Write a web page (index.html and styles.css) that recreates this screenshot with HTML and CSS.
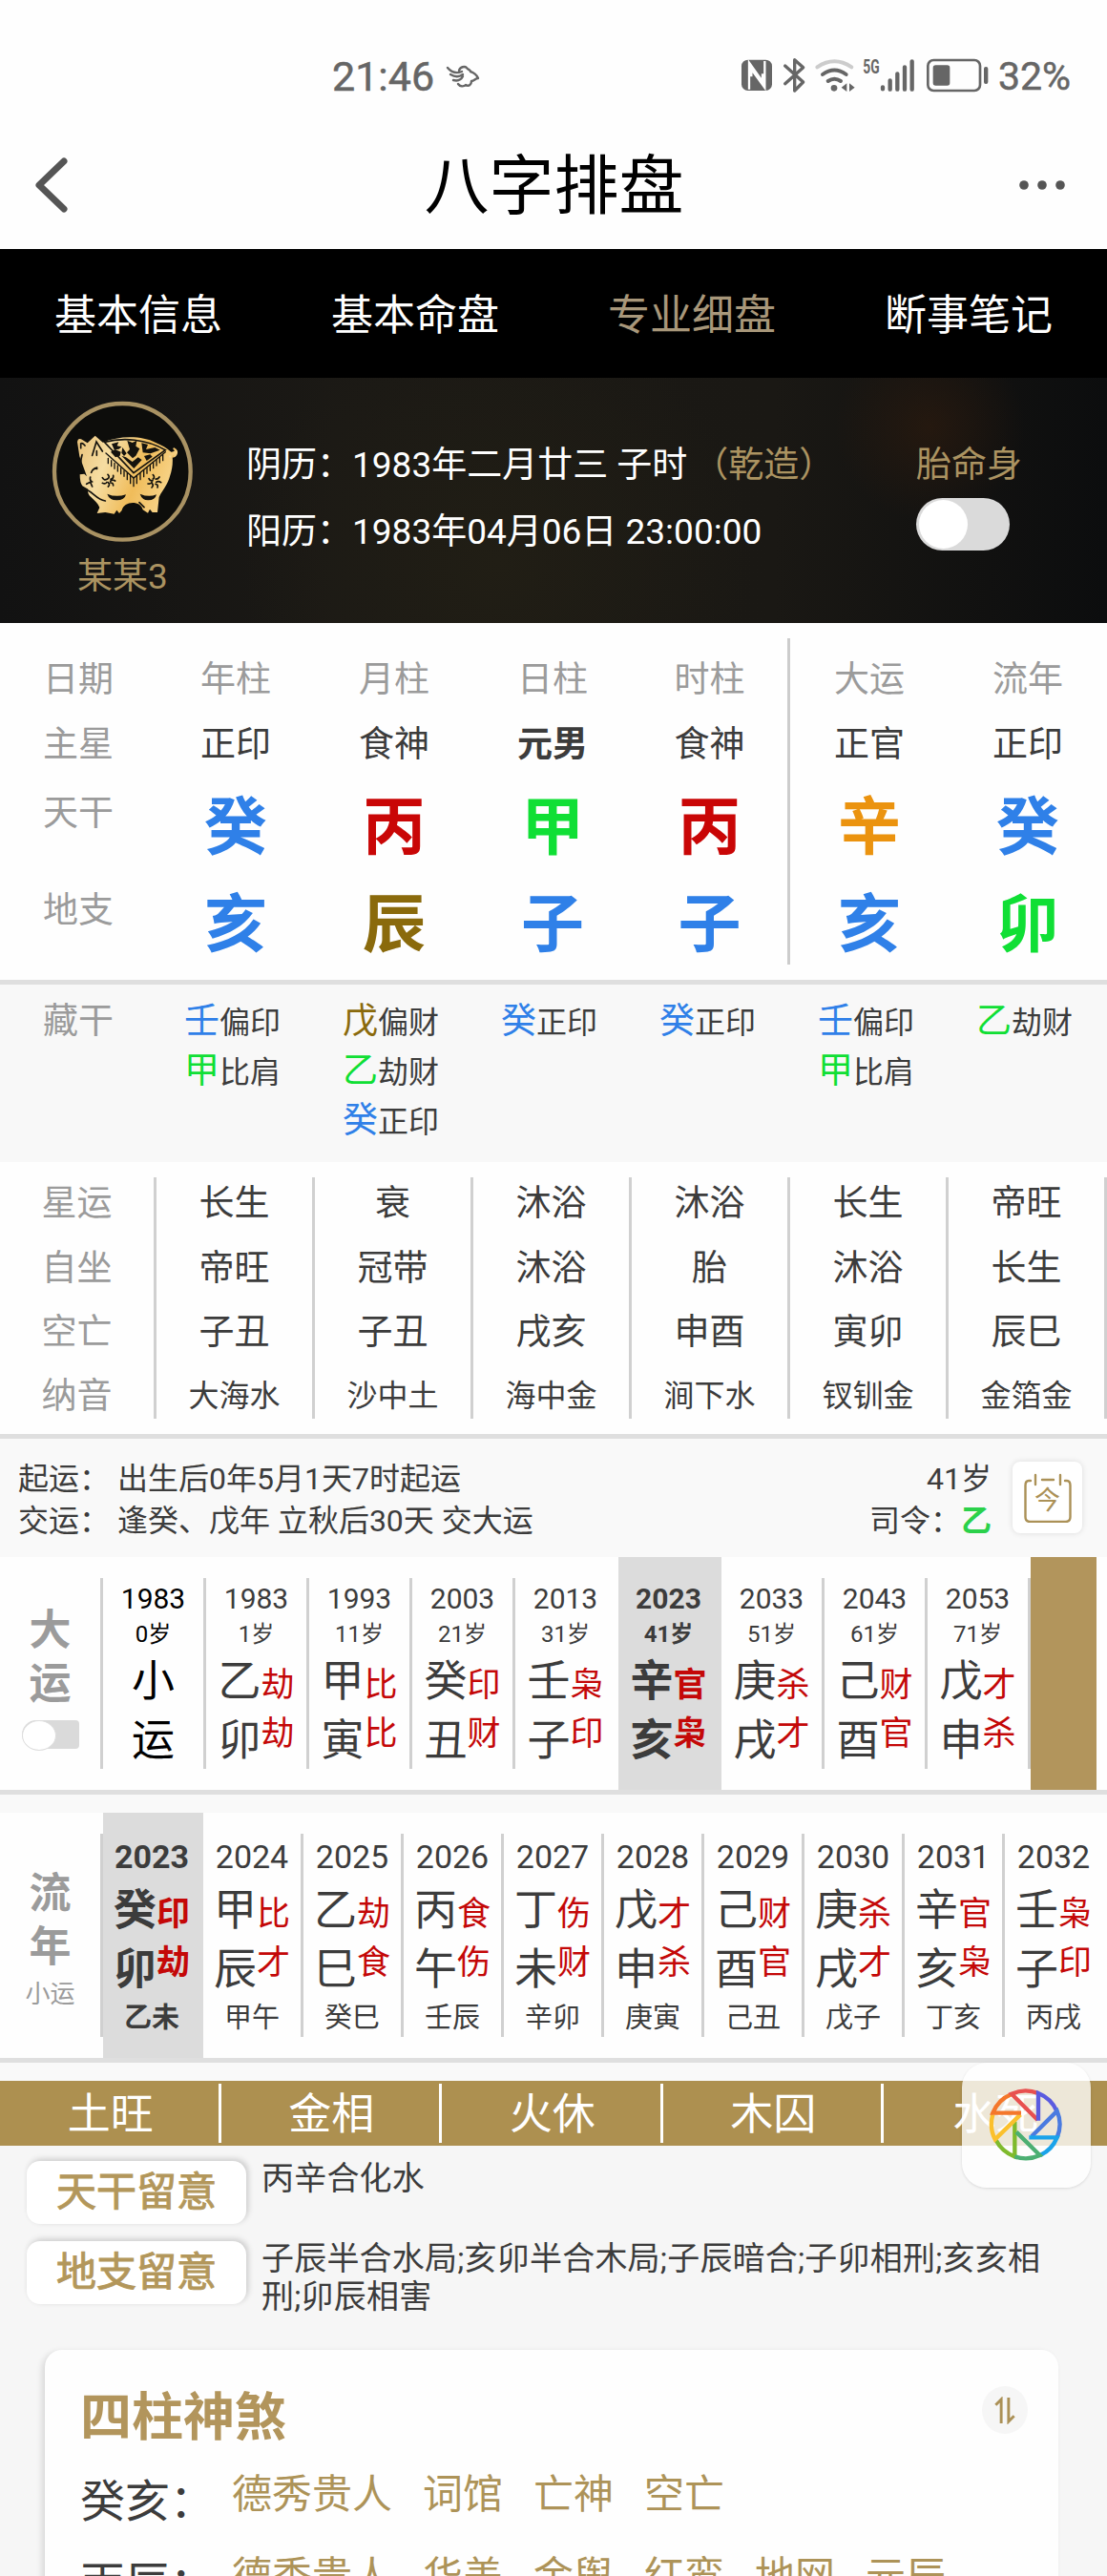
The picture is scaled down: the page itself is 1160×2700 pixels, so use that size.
FILE: index.html
```html
<!DOCTYPE html>
<html lang="zh-CN">
<head>
  <meta charset="UTF-8">
  <meta name="viewport" content="width=device-width, initial-scale=1.0">
  <title>八字排盘</title>
  <link rel="stylesheet" href="styles.css">
</head>

<body>
  <div class="page">
    <div class="status">
      <span class="time">21:46</span>
      <svg class="status-app" viewBox="0 0 36 24" fill="none" stroke="#666" stroke-width="2.4" stroke-linecap="round" stroke-linejoin="round">
        <path d="M2 3C7 9 12 9 17 7M5 10c5 3 9 3 13 0M8 16c4 1 8 0 10-4M14 6c1-4 6-5 8-3 1 2 4 2 4 4 3 1 7 4 8 7-3 0-4 3-7 3 0 4-3 6-6 4-2 2-6 2-8-1" />
      </svg>
      <svg class="status-icons" viewBox="0 0 810 180">
        <rect x="21" y="38" width="96" height="97" rx="20" fill="#666" />
        <path d="M45 131V47L87 106V82M94 42v84L52 68v23" fill="none" stroke="#fff" stroke-width="7" />
        <path d="M158 57l57 51-27 27V38l27 24-57 51" fill="none" stroke="#666" stroke-width="10" stroke-linecap="round" stroke-linejoin="round" />
        <path d="M259 61q54-36 108 0" fill="none" stroke="#ccc" stroke-width="12" stroke-linecap="round" />
        <path d="M276 84q37-27 74 0M293 105q20-13 40 0" fill="none" stroke="#666" stroke-width="12" stroke-linecap="round" />
        <circle cx="312" cy="127" r="10" fill="#666" />
        <path d="M352 112v26l-17-13zM360 112v26l17-13z" fill="#666" />
        <text x="403" y="80" class="net" textLength="52" lengthAdjust="spacingAndGlyphs">5G</text>
        <path d="M465 124v6M488 103v28M511 82v49M534 61v70M557 43v88" stroke="#666" stroke-width="13" stroke-linecap="round" />
        <rect x="607" y="39" width="164" height="96" rx="18" fill="none" stroke="#666" stroke-width="8" />
        <rect x="623" y="55" width="53" height="64" rx="8" fill="#666" />
        <rect x="783" y="60" width="13" height="54" rx="6" fill="#666" />
      </svg>
      <span class="power">32%</span>
    </div>

    <div class="titlebar">
      <svg class="back" viewBox="0 0 36 60" fill="none" stroke="#555" stroke-width="7" stroke-linecap="round" stroke-linejoin="round">
        <path d="M31 5L5 30l26 25" />
      </svg>
      <h1>八字排盘</h1>
      <svg class="more" viewBox="0 0 50 12" fill="#555">
        <circle cx="6" cy="6" r="4.8" />
        <circle cx="25" cy="6" r="4.8" />
        <circle cx="44" cy="6" r="4.8" />
      </svg>
    </div>

    <div class="tabs">
      <span>基本信息</span>
      <span>基本命盘</span>
      <span class="on">专业细盘</span>
      <span>断事笔记</span>
    </div>

    <div class="hero">
      <div class="avatar">
        <svg viewBox="0 0 480 480">
          <defs>
            <linearGradient id="gold" x1="0" x2="1" y1="0" y2="0.3">
              <stop offset="0" stop-color="#e9c27a" />
              <stop offset="0.35" stop-color="#f6dda2" />
              <stop offset="0.7" stop-color="#f0bc5a" />
              <stop offset="1" stop-color="#f7d285" />
            </linearGradient>
          </defs>
          <circle cx="235" cy="238" r="214" fill="#0d0d0b" stroke="#a99263" stroke-width="13" />
          <path fill="url(#gold)" d="M100 190L93 145q2-14 12-9l20 12 24-23 24 21c50-22 125-22 165 0 20 8 38 18 50 30 10 0 14-5 10-12 12 4 12 24-6 27 2 20-1 42-8 62-6 25-25 45-34 65l-5 48h-16l-8-10-6 12-16-10c-5-30-60-30-66 2l-8 9-8-10-8 12-28-5-26 3 8-18c-4-12-16-22-26-32-10-8-12-16-10-26l-18-10q-8-10-8-36l14-2 8 8z" />
          <path fill="none" stroke="url(#gold)" stroke-width="6" stroke-linecap="round" d="M383 190c20 6 30-14 14-24" />
          <g fill="none" stroke="#15130e" stroke-width="5" stroke-linecap="round">
            <path d="M104 150q5-4 13 6M104 150v14M140 187l13-43 19 30M154 187v-14M108 185q-10 35 5 53M137 241q5-15 18-12M155 225l-8 3M140 270q-9-3-6-15M134 271l-12 6M134 271l6 14M113 292c28 5 36 32 68 38M288 335l15 15" />
            <path d="M178 145c60-15 130-10 192 25L270 242z" />
            <path d="M183 180l87 78 100-82" stroke-width="4" />
            <path d="M190 196v16M200 203v18M210 211v18M220 219v18M230 227v18M240 235v18M250 243v20M260 250v25M270 256v28M280 250v25M291 243v20M302 234v20M312 226v18M322 217v18M332 209v18M342 201v18M352 193v17M362 185v18" stroke-width="4" />
            <path d="M189 247q8 8-1 14M206 250q2 10-8 12M212 267q-9-6-15 1M206 282q0-10-9-9M190 285q7-6 0-13M172 274q9 5 14-3M172 257q5 10 14 5" />
            <path d="M331 248q7 7 0 13M351 255q-5 8-12 6M356 272q-8-6-15-1M345 288q3-10-6-11M327 288q7-7 1-13M315 276q10 2 13-6M318 260q3 8 12 6" />
          </g>
          <path fill="#15130e" d="M187 308q28 12 59 2-4 18-29 18-24-1-30-20zM290 308q28 12 52 2-4 18-26 18-20-1-26-20z" />
          <path fill="#15130e" d="M201 151l22-6-5 12 14 3-8 7-15 2zM250 140l16 7 14-7-3 18 12 8-12 22-10 8-18-18 9-10zM295 148l20 5-6 15 28-6 16 8-30 11-24-3zM198 176l14-8 18 8-3 12-14 5zM232 188l14 5 20 14 18-14 12 8-25 27zM235 162l13 19-8 8-8-10zM303 189l19-5 7 7-18 13z" />
        </svg>
        <p>某某3</p>
      </div>
      <div class="birth">
        <p>阴历：1983年二月廿三 子时<em>（乾造）</em></p>
        <p>阳历：1983年04月06日 23:00:00</p>
      </div>
      <div class="fetal">
        <p>胎命身</p>
        <div class="switch"></div>
      </div>
    </div>

    <div class="pillars">
      <div class="col label">
        <p>日期</p>
        <p>主星</p>
        <p class="big">天干</p>
        <p class="big">地支</p>
      </div>
      <div class="col">
        <p class="head">年柱</p>
        <p>正印</p>
        <p class="big water">癸</p>
        <p class="big water">亥</p>
      </div>
      <div class="col">
        <p class="head">月柱</p>
        <p>食神</p>
        <p class="big fire">丙</p>
        <p class="big earth">辰</p>
      </div>
      <div class="col">
        <p class="head">日柱</p>
        <p><b>元男</b></p>
        <p class="big wood">甲</p>
        <p class="big water">子</p>
      </div>
      <div class="col line">
        <p class="head">时柱</p>
        <p>食神</p>
        <p class="big fire">丙</p>
        <p class="big water">子</p>
      </div>
      <div class="col">
        <p class="head">大运</p>
        <p>正官</p>
        <p class="big metal">辛</p>
        <p class="big water">亥</p>
      </div>
      <div class="col">
        <p class="head">流年</p>
        <p>正印</p>
        <p class="big water">癸</p>
        <p class="big wood">卯</p>
      </div>
    </div>
    <div class="rule"></div>

    <div class="hidden-stems">
      <div class="col label"><p>藏干</p></div>
      <div class="col">
        <p><span class="water">壬</span>偏印</p>
        <p><span class="wood">甲</span>比肩</p>
      </div>
      <div class="col">
        <p><span class="earth">戊</span>偏财</p>
        <p><span class="wood">乙</span>劫财</p>
        <p><span class="water">癸</span>正印</p>
      </div>
      <div class="col"><p><span class="water">癸</span>正印</p></div>
      <div class="col"><p><span class="water">癸</span>正印</p></div>
      <div class="col">
        <p><span class="water">壬</span>偏印</p>
        <p><span class="wood">甲</span>比肩</p>
      </div>
      <div class="col"><p><span class="wood">乙</span>劫财</p></div>
    </div>

    <div class="stages">
      <div class="col label"><p>星运</p><p>自坐</p><p>空亡</p><p>纳音</p></div>
      <div class="col"><p>长生</p><p>帝旺</p><p>子丑</p><p class="nayin">大海水</p></div>
      <div class="col"><p>衰</p><p>冠带</p><p>子丑</p><p class="nayin">沙中土</p></div>
      <div class="col"><p>沐浴</p><p>沐浴</p><p>戌亥</p><p class="nayin">海中金</p></div>
      <div class="col"><p>沐浴</p><p>胎</p><p>申酉</p><p class="nayin">涧下水</p></div>
      <div class="col"><p>长生</p><p>沐浴</p><p>寅卯</p><p class="nayin">钗钏金</p></div>
      <div class="col"><p>帝旺</p><p>长生</p><p>辰巳</p><p class="nayin">金箔金</p></div>
    </div>
    <div class="rule"></div>

    <div class="start">
      <div class="start-text">
        <p>起运： 出生后0年5月1天7时起运</p>
        <p>交运： 逢癸、戊年 立秋后30天 交大运</p>
      </div>
      <div class="start-age">
        <p>41岁</p>
        <p>司令：<b>乙</b></p>
      </div>
      <div class="today">
        <svg viewBox="0 0 50 52" fill="none" stroke="#ab9157" stroke-width="2.4" stroke-linecap="round">
          <path d="M7 8H5Q1.500 8 1.500 13v33q0 5 5 5h37q5 0 5-5V13q0-5-3.500-5h-2M12 2v10M38 2v10M19 7h12" />
        </svg>
        <span>今</span>
      </div>
    </div>

    <div class="strip dayun">
      <div class="side">
        <b>大</b>
        <b>运</b>
        <div class="switch small"></div>
      </div>
      <div class="cell xiaoyun"><div><h4>1983</h4><h5>0岁</h5><p>小</p><p>运</p></div></div>
      <div class="cell"><div><h4>1983</h4><h5>1岁</h5><p>乙<i>劫</i></p><p>卯<i>劫</i></p></div></div>
      <div class="cell"><div><h4>1993</h4><h5>11岁</h5><p>甲<i>比</i></p><p>寅<i>比</i></p></div></div>
      <div class="cell"><div><h4>2003</h4><h5>21岁</h5><p>癸<i>印</i></p><p>丑<i>财</i></p></div></div>
      <div class="cell no-line"><div><h4>2013</h4><h5>31岁</h5><p>壬<i>枭</i></p><p>子<i>印</i></p></div></div>
      <div class="cell active"><div><h4>2023</h4><h5>41岁</h5><p>辛<i>官</i></p><p>亥<i>枭</i></p></div></div>
      <div class="cell"><div><h4>2033</h4><h5>51岁</h5><p>庚<i>杀</i></p><p>戌<i>才</i></p></div></div>
      <div class="cell"><div><h4>2043</h4><h5>61岁</h5><p>己<i>财</i></p><p>酉<i>官</i></p></div></div>
      <div class="cell"><div><h4>2053</h4><h5>71岁</h5><p>戊<i>才</i></p><p>申<i>杀</i></p></div></div>
      <div class="more-years"></div>
    </div>
    <div class="rule"></div>

    <div class="gap"></div>

    <div class="strip liunian">
      <div class="side">
        <b>流</b>
        <b>年</b>
        <small>小运</small>
      </div>
      <div class="cell active"><div><h4>2023</h4><p>癸<i>印</i></p><p>卯<i>劫</i></p><h6>乙未</h6></div></div>
      <div class="cell"><div><h4>2024</h4><p>甲<i>比</i></p><p>辰<i>才</i></p><h6>甲午</h6></div></div>
      <div class="cell"><div><h4>2025</h4><p>乙<i>劫</i></p><p>巳<i>食</i></p><h6>癸巳</h6></div></div>
      <div class="cell"><div><h4>2026</h4><p>丙<i>食</i></p><p>午<i>伤</i></p><h6>壬辰</h6></div></div>
      <div class="cell"><div><h4>2027</h4><p>丁<i>伤</i></p><p>未<i>财</i></p><h6>辛卯</h6></div></div>
      <div class="cell"><div><h4>2028</h4><p>戊<i>才</i></p><p>申<i>杀</i></p><h6>庚寅</h6></div></div>
      <div class="cell"><div><h4>2029</h4><p>己<i>财</i></p><p>酉<i>官</i></p><h6>己丑</h6></div></div>
      <div class="cell"><div><h4>2030</h4><p>庚<i>杀</i></p><p>戌<i>才</i></p><h6>戊子</h6></div></div>
      <div class="cell"><div><h4>2031</h4><p>辛<i>官</i></p><p>亥<i>枭</i></p><h6>丁亥</h6></div></div>
      <div class="cell no-line"><div><h4>2032</h4><p>壬<i>枭</i></p><p>子<i>印</i></p><h6>丙戌</h6></div></div>
    </div>
    <div class="rule"></div>

    <div class="gap"></div>

    <div class="elements">
      <span>土旺</span>
      <span>金相</span>
      <span>火休</span>
      <span>木囚</span>
      <span>水死</span>
    </div>

    <div class="notes">
      <div class="note">
        <b>天干留意</b>
        <p>丙辛合化水</p>
      </div>
      <div class="note">
        <b>地支留意</b>
        <p>子辰半合水局;亥卯半合木局;子辰暗合;子卯相刑;亥亥相刑;卯辰相害</p>
      </div>
    </div>

    <div class="card">
      <div class="card-head">
        <h2>四柱神煞</h2>
        <div class="sort">
          <svg viewBox="0 0 24 30" fill="none" stroke="#ab9157" stroke-width="3">
            <path d="M2 9l6-6v26M22 21l-6 6V1" />
          </svg>
        </div>
      </div>
      <div class="stars">
        <strong>癸亥：</strong>
        <span>德秀贵人</span><span>词馆</span><span>亡神</span><span>空亡</span>
      </div>
      <div class="stars">
        <strong>丙辰：</strong>
        <span>德秀贵人</span><span>华盖</span><span>金舆</span><span>红鸾</span><span>地网</span><span>元辰</span>
      </div>
    </div>

    <div class="float">
      <svg viewBox="105 80 240 240" fill="none" stroke-width="13">
        <path stroke="#7fba2c" d="M190 190v110A106 106 0 0 1 131 249" />
        <path stroke="#fbc02d" d="M208 168l-80 78A106 106 0 0 1 121 168" />
        <path stroke="#f4772b" d="M210 163H121A106 106 0 0 1 180 104" />
        <path stroke="#e8504f" d="M262 185l-82-82A106 106 0 0 1 264 101" />
        <path stroke="#5b5be0" d="M264 187V101A106 106 0 0 1 322 157" />
        <path stroke="#4a7be0" d="M243 237l80-80A106 106 0 0 1 323 240" />
        <path stroke="#1aa3ea" d="M235 240h88A106 106 0 0 1 270 296" />
        <path stroke="#4caf72" d="M195 223l74 73A106 106 0 0 1 190 300" />
      </svg>
    </div>
  </div>
</body>

</html>
```

FILE: styles.css
```css
* {
  box-sizing: border-box;
  margin: 0;
  padding: 0;
}

body {
  font-family: Roboto, "Noto Sans CJK SC", sans-serif;
  color: #3c3c3c;
  background: #f6f6f6;
}

i,
em {
  font-style: normal;
}

svg {
  display: block;
  flex: none;
}

.page {
  position: relative;
  width: 1160px;
  height: 2700px;
  overflow: hidden;
}

/* status bar */
.status {
  display: flex;
  align-items: center;
  height: 160px;
  padding-left: 348px;
  background: #fefefe;
  color: #666;
  white-space: nowrap;
}

.time {
  width: 119px;
  font-size: 43px;
}

.status-app {
  width: 36px;
  height: 24px;
}

.status-icons {
  width: 270px;
  height: 60px;
  margin-left: 267px;
}

.net {
  font-size: 60px;
  font-weight: bold;
  fill: #666;
}

.power {
  margin-left: 6px;
  font-size: 41px;
}

.time,
.power {
  -webkit-text-stroke: 0.5px #666;
}

.titlebar {
  display: flex;
  align-items: center;
  justify-content: space-between;
  height: 101px;
  padding: 0 43px 33px 36px;
  background: #fefefe;
}

.titlebar h1 {
  font-size: 68px;
  font-weight: normal;
  line-height: 72px;
  color: #000;
  padding: 4px 0 0 22px;
}

.back {
  width: 36px;
  height: 60px;
}

.more {
  width: 50px;
  height: 12px;
}

.tabs {
  display: flex;
  height: 135px;
  line-height: 140px;
  background: #000;
  color: #fff;
  font-size: 44px;
}

.tabs span {
  flex: 1;
  text-align: center;
}

.tabs .on {
  color: #a8977a;
}

/* profile */
.hero {
  display: flex;
  height: 257px;
  font-size: 37px;
  color: #fff;
  background:
    radial-gradient(circle at 84% 20%, rgba(48, 28, 14, 0.6) 0, transparent 10%),
    radial-gradient(circle at 45% 75%, #211e15 0, transparent 40%),
    linear-gradient(90deg, #121212, #1b1915 30%, #1a1814 70%, #0c0d0e);
}

.avatar {
  width: 210px;
  padding: 19px 0 0 50px;
}

.avatar svg {
  width: 160px;
  height: 160px;
}

.avatar p {
  width: 157px;
  margin-top: 9px;
  line-height: 42px;
  text-align: center;
  color: #ab9361;
}

.birth {
  width: 750px;
  padding: 57px 0 0 48px;
  line-height: 70px;
  white-space: nowrap;
}

.birth em,
.fetal p {
  color: #ab9361;
}

.birth em {
  margin-left: 6px;
}

.fetal {
  padding-top: 57px;
  line-height: 70px;
}

.fetal p {
  height: 69px;
}

.switch {
  width: 98px;
  height: 55px;
  padding: 2px 3px;
  border-radius: 28px;
  background: #dadada;
}

.switch::before {
  content: "";
  display: block;
  width: 51px;
  height: 51px;
  border-radius: 50%;
  background: #fff;
}

/* four pillars */
.pillars,
.hidden-stems,
.stages {
  display: flex;
  font-size: 37px;
}

.col {
  width: 166px;
  text-align: center;
}

.label {
  width: 164px;
  color: #9b9b9b;
}

.pillars {
  height: 374px;
  padding-top: 16px;
  background: #fefefe;
}

.pillars .col {
  height: 342px;
  padding-top: 10px;
  line-height: 68px;
}

.pillars .line {
  border-right: 3px solid #ccc;
}

.pillars .head {
  color: #9b9b9b;
}

.pillars .big {
  height: 102px;
  font-size: 66px;
  font-weight: bold;
  line-height: 106px;
}

.pillars .label .big {
  font-size: 37px;
  font-weight: normal;
  line-height: 76px;
}

.water {
  color: #2f80e8;
}

.fire {
  color: #c90606;
}

.wood {
  color: #10df35;
}

.earth {
  color: #8a6a0c;
}

.metal {
  color: #eb930f;
}

.rule {
  height: 5px;
  background: #dfdfdf;
}

.hidden-stems {
  height: 186px;
  padding-top: 13px;
  background: #f8f8f8;
  line-height: 52px;
}

.hidden-stems .col {
  font-size: 32px;
  padding-left: 29px;
  text-align: left;
}

.hidden-stems .label {
  padding-left: 0;
  font-size: 37px;
  text-align: center;
}

.hidden-stems span {
  font-size: 37px;
}

.hidden-stems .col p {
  height: 52px;
}

.stages {
  height: 285px;
  padding-top: 16px;
  background: #fefefe;
}

.stages .col {
  display: flex;
  flex-direction: column;
  gap: 15.5px;
  height: 253px;
  border-right: 3px solid #d0d0d0;
  line-height: 56px;
}

.stages p {
  height: 52px;
}

.stages p:last-child {
  line-height: 53px;
}

.nayin {
  font-size: 32px;
}

/* start of luck */
.start {
  display: flex;
  height: 124px;
  padding: 20px 26px 0 19px;
  background: #f9f9f9;
  font-size: 32px;
  line-height: 44px;
}

.start-text {
  flex: 1;
  white-space: nowrap;
}

.start-age {
  margin-right: 22px;
  text-align: right;
}

.start-age b {
  color: #2bd14b;
}

.today {
  display: grid;
  place-items: center;
  width: 73px;
  height: 75px;
  margin-top: 4px;
  border-radius: 8px;
  background: #fff;
  box-shadow: 0 0 6px rgba(0, 0, 0, 0.12);
}

.today svg,
.today span {
  grid-area: 1 / 1;
}

.today svg {
  width: 50px;
  height: 52px;
}

.today span {
  padding-top: 8px;
  font-size: 27px;
  line-height: 27px;
  color: #ab9157;
}

/* year strips */
.strip {
  display: flex;
  background: #fefefe;
}

.side {
  display: flex;
  flex-direction: column;
  align-items: center;
  width: 108px;
  color: #9b9b9b;
  font-size: 44px;
  line-height: 56px;
  border-right: 3px solid #d0d0d0;
}

.dayun {
  height: 244px;
}

.dayun .side {
  height: 200px;
  margin-top: 22px;
  padding-top: 27px;
}

.liunian {
  height: 257px;
}

.liunian .side {
  height: 213px;
  margin-top: 22px;
  padding-top: 35px;
}

.side small {
  font-size: 26px;
  line-height: 42px;
}

.switch.small {
  width: 60px;
  height: 30px;
  margin-top: 10px;
  padding: 0;
  border-radius: 15px 4px 4px 15px;
}

.switch.small::before {
  width: 34px;
  height: 30px;
  border: 1px solid #ddd;
}

.cell {
  width: 108px;
  padding: 22px 0;
}

.liunian .cell {
  width: 105px;
}

.cell div {
  height: 100%;
  border-right: 3px solid #d0d0d0;
}

.cell.active {
  background: #dcdcdc;
}

.cell.active div,
.cell.no-line div {
  border-color: transparent;
}

.cell h4,
.cell h5,
.cell h6 {
  font-weight: normal;
  text-align: center;
}

.cell.active * {
  font-weight: bold;
}

.cell h4 {
  font-size: 30px;
  line-height: 43px;
}

.liunian h4 {
  font-size: 34px;
  line-height: 48px;
}

.cell h5 {
  font-size: 24px;
  line-height: 32px;
  margin-bottom: 1px;
}

.cell h6 {
  font-size: 29px;
  line-height: 43px;
}

.cell p {
  display: flex;
  align-items: center;
  justify-content: center;
  height: 62px;
  padding-top: 3px;
  font-size: 45px;
  line-height: 62px;
}

.cell i {
  margin-top: 8px;
  font-size: 35px;
  line-height: 40px;
  color: #c40808;
}

.cell p + p i {
  margin-top: -14px;
}

.xiaoyun {
  color: #000;
}

.more-years {
  width: 69px;
  background: #b2955c;
}

.gap {
  height: 19px;
  background: #f9f9f9;
}

.elements {
  display: flex;
  height: 68px;
  padding: 3px 0;
  background: #ad9050;
  color: #fff;
  font-size: 45px;
  line-height: 66px;
}

.elements span {
  width: 231.5px;
  height: 62px;
  padding-left: 3px;
  border-right: 3px solid #fff;
  text-align: center;
}

.elements span:last-child {
  border: 0;
}

/* notes */
.notes {
  padding: 16px 28px 0;
}

.note {
  display: flex;
  align-items: flex-start;
  height: 84px;
}

.note b {
  width: 230px;
  height: 66px;
  border-radius: 14px;
  background: #fff;
  box-shadow: 2px -2px 6px rgba(0, 0, 0, 0.18);
  color: #b3975b;
  font-size: 42px;
  font-weight: normal;
  line-height: 66px;
  text-align: center;
  -webkit-text-stroke: 1px #b3975b;
}

.note p {
  width: 830px;
  margin: -2px 0 0 16px;
  font-size: 34px;
  letter-spacing: 0.2px;
  line-height: 40px;
}

.card {
  width: 1062px;
  height: 300px;
  margin: 30px 0 0 47px;
  padding: 38px 32px 0 37px;
  border-radius: 18px;
  background: #fefefe;
  box-shadow: -3px 2px 6px rgba(0, 0, 0, 0.12);
}

.card-head {
  display: flex;
  justify-content: space-between;
  height: 75px;
}

.card-head h2 {
  font-size: 54px;
  line-height: 67px;
  color: #b2955c;
}

.sort {
  display: grid;
  place-items: center;
  width: 48px;
  height: 50px;
  border-radius: 50%;
  background: #f6f6f6;
}

.sort svg {
  width: 24px;
  height: 29px;
}

.stars {
  display: flex;
  height: 86px;
  font-size: 42px;
  line-height: 77px;
  color: #ad9358;
  white-space: nowrap;
}

.stars strong {
  width: 159px;
  font-size: 47px;
  font-weight: normal;
  line-height: 92px;
  color: #3c3c3c;
}

.stars span {
  margin-right: 32px;
}

/* floating shortcut */
.float {
  position: absolute;
  left: 1008px;
  top: 2162px;
  width: 135px;
  height: 131px;
  padding: 25px 0 0 27px;
  border-radius: 26px;
  background: rgba(255, 255, 255, 0.78);
  box-shadow: 0 1px 3px rgba(0, 0, 0, 0.12);
}

.float svg {
  width: 80px;
  height: 80px;
}
```
